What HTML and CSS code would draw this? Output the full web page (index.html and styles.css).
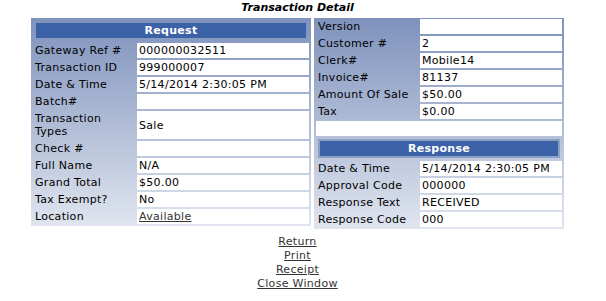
FILE: index.html
```html
<!DOCTYPE html>
<html>
<head>
<meta charset="utf-8">
<title>Transaction Detail</title>
<link rel="stylesheet" href="styles.css">
</head>
<body>
<div class="page">
  <h1 class="title">Transaction Detail</h1>
  <div class="panels">
    <div class="panel panel-left">
      <div class="head"><div class="bar">Request</div></div>
      <div class="lbl">Gateway Ref #</div><div class="val">000000032511</div>
      <div class="lbl">Transaction ID</div><div class="val">999000007</div>
      <div class="lbl">Date &amp; Time</div><div class="val">5/14/2014 2:30:05 PM</div>
      <div class="lbl">Batch#</div><div class="val"></div>
      <div class="lbl">Transaction Types</div><div class="val mid">Sale</div>
      <div class="lbl">Check #</div><div class="val"></div>
      <div class="lbl">Full Name</div><div class="val">N/A</div>
      <div class="lbl">Grand Total</div><div class="val">$50.00</div>
      <div class="lbl">Tax Exempt?</div><div class="val">No</div>
      <div class="lbl">Location</div><div class="val"><a class="link" href="#">Available</a></div>
    </div>
    <div class="panel panel-right">
      <div class="lbl">Version</div><div class="val"></div>
      <div class="lbl">Customer #</div><div class="val">2</div>
      <div class="lbl">Clerk#</div><div class="val">Mobile14</div>
      <div class="lbl">Invoice#</div><div class="val">81137</div>
      <div class="lbl">Amount Of Sale</div><div class="val">$50.00</div>
      <div class="lbl">Tax</div><div class="val">$0.00</div>
      <div class="val span"></div>
      <div class="head-r"><div class="frame"><div class="bar">Response</div></div></div>
      <div class="lbl">Date &amp; Time</div><div class="val">5/14/2014 2:30:05 PM</div>
      <div class="lbl">Approval Code</div><div class="val">000000</div>
      <div class="lbl">Response Text</div><div class="val">RECEIVED</div>
      <div class="lbl">Response Code</div><div class="val">000</div>
    </div>
  </div>
  <div class="links">
    <a class="link" href="#">Return</a>
    <a class="link" href="#">Print</a>
    <a class="link" href="#">Receipt</a>
    <a class="link" href="#">Close Window</a>
  </div>
</div>
</body>
</html>
```
FILE: styles.css
```css
html, body {
  margin: 0;
  padding: 0;
  background: #fff;
}
body {
  font-family: "DejaVu Sans", Verdana, sans-serif;
  font-size: 11px;
  color: #000;
}
.page {
  width: 595px;
}
.title {
  margin: 0;
  padding-top: 1px;
  font-size: 11px;
  line-height: 14px;
  font-weight: bold;
  font-style: italic;
  text-align: center;
}
.panels {
  display: flex;
  justify-content: center;
  align-items: flex-start;
  gap: 3px;
  margin-top: 3px;
}
.panel {
  display: grid;
  gap: 2px;
  background: linear-gradient(to bottom, #7e92bc 0%, #e0e5ef 100%);
  line-height: 13px;
  letter-spacing: 0.3px;
}
.panel-left {
  grid-template-columns: 102px 172px;
  padding: 2px;
}
.panel-right {
  grid-template-columns: 102px 142px;
  padding: 1px 2px 2px 2px;
}
.head {
  grid-column: 1 / -1;
  padding: 3px;
}
.head-r {
  grid-column: 1 / -1;
  padding: 1px 2px;
}
.frame {
  border: 2px solid #8c9fc5;
}
.bar {
  height: 15px;
  line-height: 15px;
  background: #3b62a6;
  color: #fff;
  font-weight: bold;
  text-align: center;
  letter-spacing: 0.3px;
}
.lbl {
  padding: 1px 1px 1px 2px;
  min-height: 13px;
}
.val {
  background: #fff;
  padding: 1px 1px 1px 2px;
  min-height: 13px;
}
.val.mid {
  display: flex;
  align-items: center;
}
.val.span {
  grid-column: 1 / -1;
}
.link {
  color: #333;
  text-decoration: underline;
}
.links {
  margin-top: 6px;
  display: flex;
  flex-direction: column;
  align-items: center;
  line-height: 14px;
  letter-spacing: 0.3px;
}
```
